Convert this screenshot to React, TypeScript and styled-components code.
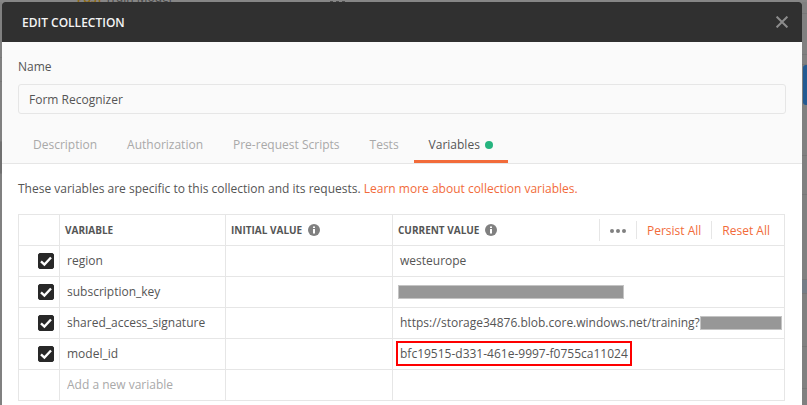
import React, { useState } from "react";
import styled, { createGlobalStyle } from "styled-components";

const GlobalStyle = createGlobalStyle`
  *, *::before, *::after { box-sizing: border-box; }
  body {
    margin: 0;
    background: #868686;
    color: #555;
    font: 12px/16px "Open Sans", "Noto Sans", sans-serif;
  }
  button, input { font: inherit; color: inherit; }
`;

const line = "#e6e6e6";
const orange = "#f26b3a";

const Page = styled.div`
  display: grid;
  grid-template-columns: 2px minmax(0, 1fr) 5px;
  grid-template-rows: 2px 1fr;
  min-height: 100vh;
`;

const TopStrip = styled.div`
  grid-column: 1 / -1;
  display: flex;
  align-items: flex-end;
  gap: 8px;
  padding-left: 77px;
  overflow: hidden;
  line-height: 8px;
  color: #444;
`;

const Method = styled.span`
  width: 20px;
  font-size: 10px;
  line-height: 6px;
  font-weight: 700;
  color: #8f6a12;
`;

const StripDots = styled.svg`
  margin-left: 150px;
`;

const Edge = styled.div`
  display: flex;
  flex-direction: column;
  background: #808080;
`;

const EdgeBlock = styled.div<{ $height: number; $color?: string }>`
  height: ${(p) => p.$height}px;
  background: ${(p) => p.$color ?? "transparent"};
  border-bottom: 1px solid #777;
`;

const SaveEdge = styled.div`
  height: 40px;
  margin: 0 0 10px 1px;
  border-radius: 3px 0 0 3px;
  background: #235a92;
`;

const Modal = styled.section`
  display: flex;
  flex-direction: column;
  border-radius: 3px 3px 0 0;
  background: #fff;
  overflow: hidden;
`;

const Header = styled.header`
  display: flex;
  align-items: center;
  justify-content: space-between;
  height: 40px;
  padding: 0 14px 0 20px;
  background: #303030;
`;

const Title = styled.h1`
  margin: 0;
  padding-top: 2px;
  font-size: 12px;
  font-weight: 600;
  color: #f4f4f4;
`;

const CloseButton = styled.button`
  display: flex;
  padding: 0;
  border: 0;
  background: none;
  color: #8c8c8c;
`;

const Top = styled.div`
  padding: 17px 16px 0;
  background: #fafafa;
  border-bottom: 1px solid ${line};
`;

const NameLabel = styled.label`
  display: block;
  margin-bottom: 9px;
`;

const NameInput = styled.input`
  display: block;
  width: 100%;
  height: 30px;
  padding: 0 10px;
  border: 1px solid ${line};
  border-radius: 3px;
  background: #fafafa;
  outline: 0;
`;

const Tabs = styled.nav`
  display: flex;
  margin-top: 14px;
`;

const Tab = styled.button<{ $active: boolean }>`
  display: flex;
  align-items: center;
  gap: 5px;
  height: 35px;
  padding: 2px 15px 0;
  border: 0;
  border-bottom: 3px solid ${(p) => (p.$active ? orange : "transparent")};
  background: none;
  color: ${(p) => (p.$active ? "#555" : "#a9a9a9")};
  white-space: nowrap;
`;

const Dot = styled.span`
  width: 8px;
  height: 8px;
  border-radius: 50%;
  background: #26b47f;
`;

const Content = styled.div`
  padding: 17px 17px 4px 16px;
`;

const Intro = styled.p`
  margin: 0 0 17px;
`;

const Link = styled.a`
  color: ${orange};
  text-decoration: none;
`;

const Table = styled.table`
  width: 100%;
  table-layout: fixed;
  border-collapse: separate;
  border-spacing: 0;
  border-top: 1px solid ${line};
  border-left: 1px solid ${line};
`;

const Col = styled.col<{ $width?: number }>`
  width: ${(p) => (p.$width ? `${p.$width}px` : "auto")};
`;

const HeadCell = styled.th`
  height: 31px;
  padding: 0 0 0 5px;
  border-right: 1px solid ${line};
  border-bottom: 1px solid ${line};
  text-align: left;
  font-size: 10px;
  font-weight: 700;
`;

const HeadContent = styled.div`
  display: flex;
  align-items: center;
  gap: 6px;
`;

const Cell = styled.td`
  height: 31px;
  padding: 0 2px 0 7px;
  border-right: 1px solid ${line};
  border-bottom: 1px solid ${line};
  white-space: nowrap;
`;

const Actions = styled.div`
  display: flex;
  align-items: center;
  height: 22px;
  margin-left: auto;
  padding-right: 4px;
  border-left: 1px solid ${line};
`;

const Action = styled.button`
  display: flex;
  align-items: center;
  height: 18px;
  padding: 1px 10px 0;
  border: 0;
  background: none;
  color: ${orange};
  font-size: 12px;
  font-weight: 400;
  & + & { border-left: 1px solid ${line}; }
`;

const CheckLabel = styled.label`
  position: relative;
  display: block;
  width: 16px;
  height: 16px;
  margin-left: 12px;
`;

const CheckInput = styled.input`
  appearance: none;
  display: block;
  width: 16px;
  height: 16px;
  margin: 0;
  border: 1px solid #282828;
  border-radius: 2px;
  background: #fff;
  &:checked { background: #282828; }
`;

const CheckMark = styled.svg`
  position: absolute;
  inset: 0;
  pointer-events: none;
`;

const Value = styled.div`
  display: flex;
  align-items: center;
`;

const Redacted = styled.span<{ $width: number; $lead?: boolean }>`
  width: ${(p) => p.$width}px;
  height: 14px;
  margin-left: ${(p) => (p.$lead ? "-2px" : "0")};
  border: 1px solid #c4c4c4;
  background: #979797;
`;

const Highlight = styled.span`
  margin: 0 0 2px -4px;
  padding: 2px;
  border: 2px solid #fe0000;
  line-height: 17px;
`;

const NewVariable = styled.input`
  display: block;
  width: 100%;
  padding: 0;
  border: 0;
  outline: 0;
  background: none;
  &::placeholder { color: #a9a9a9; opacity: 1; }
`;

const InfoIcon = () => (
  <svg width="12" height="12" viewBox="0 0 12 12" aria-hidden="true">
    <circle cx="6" cy="6" r="6" fill="#808080" />
    <path d="M5 2.5h2v1.5H5zM5 5h2v4.5H5z" fill="#fff" />
  </svg>
);

const MoreIcon = () => (
  <svg width="16" height="4" viewBox="0 0 16 4" aria-hidden="true" fill="#808080">
    <circle cx="2" cy="2" r="2" />
    <circle cx="8" cy="2" r="2" />
    <circle cx="14" cy="2" r="2" />
  </svg>
);

const tabs = ["Description", "Authorization", "Pre-request Scripts", "Tests", "Variables"];

const variables: { name: string; value: React.ReactNode }[] = [
  { name: "region", value: "westeurope" },
  { name: "subscription_key", value: <Redacted $width={226} $lead /> },
  {
    name: "shared_access_signature",
    value: (
      <>
        https://storage34876.blob.core.windows.net/training?
        <Redacted $width={82} />
      </>
    ),
  },
  { name: "model_id", value: <Highlight>bfc19515-d331-461e-9997-f0755ca11024</Highlight> },
];

function Checkbox({ label }: { label: string }) {
  const [checked, setChecked] = useState(true);
  return (
    <CheckLabel>
      <CheckInput
        type="checkbox"
        aria-label={label}
        checked={checked}
        onChange={(e) => setChecked(e.target.checked)}
      />
      <CheckMark width="16" height="16" viewBox="0 0 16 16" aria-hidden="true">
        <path d="M3 8.3l3.4 3.2L13 4.5" fill="none" stroke="#fff" strokeWidth="2.4" />
      </CheckMark>
    </CheckLabel>
  );
}

export default function App() {
  const [name, setName] = useState("Form Recognizer");
  const [active, setActive] = useState("Variables");
  return (
    <>
      <GlobalStyle />
      <Page>
        <TopStrip aria-hidden="true">
          <Method>POST</Method>
          <span>Train Model</span>
          <StripDots width="16" height="1" viewBox="0 0 16 1" fill="#4c4c4c">
            <path d="M0 0h3v1H0zM6 0h3v1H6zM12 0h3v1h-3z" />
          </StripDots>
        </TopStrip>
        <Edge>
          <EdgeBlock $height={56} />
          <EdgeBlock $height={24} />
          <EdgeBlock $height={60} />
          <EdgeBlock $height={32} $color="#707070" />
        </Edge>
        <Modal role="dialog" aria-labelledby="modal-title">
          <Header>
            <Title id="modal-title">EDIT COLLECTION</Title>
            <CloseButton type="button" aria-label="Close">
              <svg width="12" height="12" viewBox="0 0 12 12" stroke="currentColor" strokeWidth="2">
                <path d="M.6.6l10.8 10.8M11.4.6L.6 11.4" />
              </svg>
            </CloseButton>
          </Header>
          <Top>
            <NameLabel htmlFor="collection-name">Name</NameLabel>
            <NameInput
              id="collection-name"
              value={name}
              onChange={(e) => setName(e.target.value)}
            />
            <Tabs>
              {tabs.map((tab) => (
                <Tab key={tab} type="button" $active={tab === active} onClick={() => setActive(tab)}>
                  {tab}
                  {tab === "Variables" && <Dot />}
                </Tab>
              ))}
            </Tabs>
          </Top>
          <Content>
            <Intro>
              These variables are specific to this collection and its requests.{" "}
              <Link href="#variables">Learn more about collection variables.</Link>
            </Intro>
            <Table>
              <colgroup>
                <Col $width={41} />
                <Col $width={166} />
                <Col $width={167} />
                <Col />
              </colgroup>
              <thead>
                <tr>
                  <HeadCell />
                  <HeadCell>VARIABLE</HeadCell>
                  <HeadCell>
                    <HeadContent>INITIAL VALUE <InfoIcon /></HeadContent>
                  </HeadCell>
                  <HeadCell>
                    <HeadContent>
                      CURRENT VALUE <InfoIcon />
                      <Actions>
                        <Action type="button" aria-label="More actions"><MoreIcon /></Action>
                        <Action type="button">Persist All</Action>
                        <Action type="button">Reset All</Action>
                      </Actions>
                    </HeadContent>
                  </HeadCell>
                </tr>
              </thead>
              <tbody>
                {variables.map((v) => (
                  <tr key={v.name}>
                    <Cell><Checkbox label={v.name} /></Cell>
                    <Cell>{v.name}</Cell>
                    <Cell />
                    <Cell><Value>{v.value}</Value></Cell>
                  </tr>
                ))}
                <tr>
                  <Cell />
                  <Cell><NewVariable aria-label="New variable" placeholder="Add a new variable" /></Cell>
                  <Cell />
                  <Cell />
                </tr>
              </tbody>
            </Table>
          </Content>
        </Modal>
        <Edge>
          <EdgeBlock $height={12} />
          <EdgeBlock $height={41} />
          <EdgeBlock $height={10} />
          <SaveEdge />
          <EdgeBlock $height={41} />
          <EdgeBlock $height={39} />
          <EdgeBlock $height={85} />
          <EdgeBlock $height={14} $color="#747d87" />
          <EdgeBlock $height={53} />
          <EdgeBlock $height={42} />
        </Edge>
      </Page>
    </>
  );
}
